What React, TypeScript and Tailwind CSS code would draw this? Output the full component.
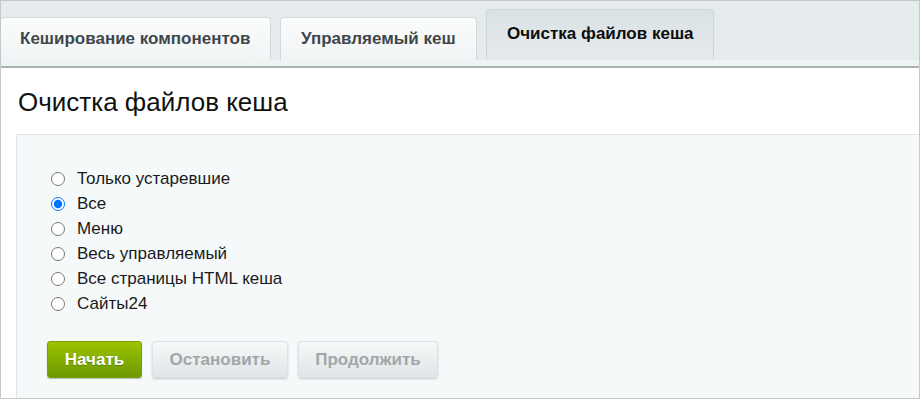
import React, { useState } from 'react';

const options = [
  'Только устаревшие',
  'Все',
  'Меню',
  'Весь управляемый',
  'Все страницы HTML кеша',
  'Сайты24',
];

export default function App() {
  const [selected, setSelected] = useState(1);

  return (
    <div className="w-[920px] h-[399px] overflow-hidden border border-[#c4c8ca] bg-white font-['Liberation_Sans',Arial,sans-serif] flex flex-col">
      {/* Tabs */}
      <div className="h-[59px] shrink-0 bg-[#e6ecee] flex items-end gap-[9px]">
        <div className="w-[270px] h-[43px] rounded-t-[4px] border border-b-0 border-l-0 border-[#d3d9db] bg-gradient-to-b from-[#fbfcfc] to-[#f1f4f5] flex items-center pl-[19px] text-[17px] font-bold text-[#3e474b]">
          Кеширование компонентов
        </div>
        <div className="w-[197px] h-[43px] rounded-t-[4px] border border-b-0 border-[#d3d9db] bg-gradient-to-b from-[#fbfcfc] to-[#f1f4f5] flex items-center pl-[20px] text-[17px] font-bold text-[#3e474b]">
          Управляемый кеш
        </div>
        <div className="w-[228px] h-[51px] rounded-t-[4px] border border-b-0 border-[#cfd6d8] bg-gradient-to-b from-[#dae2e5] to-[#e5eaec] flex items-center pl-[20px] pb-[2px] text-[17px] font-bold text-[#0d0d0d]">
          Очистка файлов кеша
        </div>
      </div>
      <div className="h-[8px] shrink-0 bg-[#eef3f4] border-b-2 border-[#aab1b3]" />

      {/* Content */}
      <div className="flex-1 flex flex-col">
        <div className="h-[66px] shrink-0 flex items-center pl-[17px] pt-[3px] text-[26px] text-[#111]">
          Очистка файлов кеша
        </div>
        <div className="flex-1 ml-[15px] bg-[#f5f9fa] border-t border-l border-[#dfe5e6] pl-[30px] pt-[31px]">
          <div className="flex flex-col pl-[4px]">
            {options.map((label, i) => (
              <label key={label} className="h-[25px] flex items-center gap-[12px] text-[17px] text-[#1a1a1a]">
                <input
                  type="radio"
                  name="mode"
                  checked={selected === i}
                  onChange={() => setSelected(i)}
                  className="m-0 w-[14px] h-[14px]"
                />
                {label}
              </label>
            ))}
          </div>
          <div className="flex gap-[10px] mt-[25px]">
            <button className="h-[37px] w-[95px] rounded-[3px] bg-gradient-to-b from-[#9bc300] to-[#6e9a00] border border-[#78a000] shadow-[0_1px_1px_rgba(0,0,0,0.25)] text-white text-[17px] font-bold [text-shadow:0_1px_1px_rgba(0,0,0,0.25)]">
              Начать
            </button>
            <button className="h-[37px] w-[136px] rounded-[3px] bg-gradient-to-b from-[#f6f8f9] to-[#dfe5e7] border border-[#dde3e5] shadow-[0_1px_2px_rgba(0,0,0,0.2)] text-[#a1a6a9] text-[17px] font-bold">
              Остановить
            </button>
            <button className="h-[37px] w-[140px] rounded-[3px] bg-gradient-to-b from-[#f6f8f9] to-[#dfe5e7] border border-[#dde3e5] shadow-[0_1px_2px_rgba(0,0,0,0.2)] text-[#a1a6a9] text-[17px] font-bold">
              Продолжить
            </button>
          </div>
        </div>
      </div>
    </div>
  );
}
